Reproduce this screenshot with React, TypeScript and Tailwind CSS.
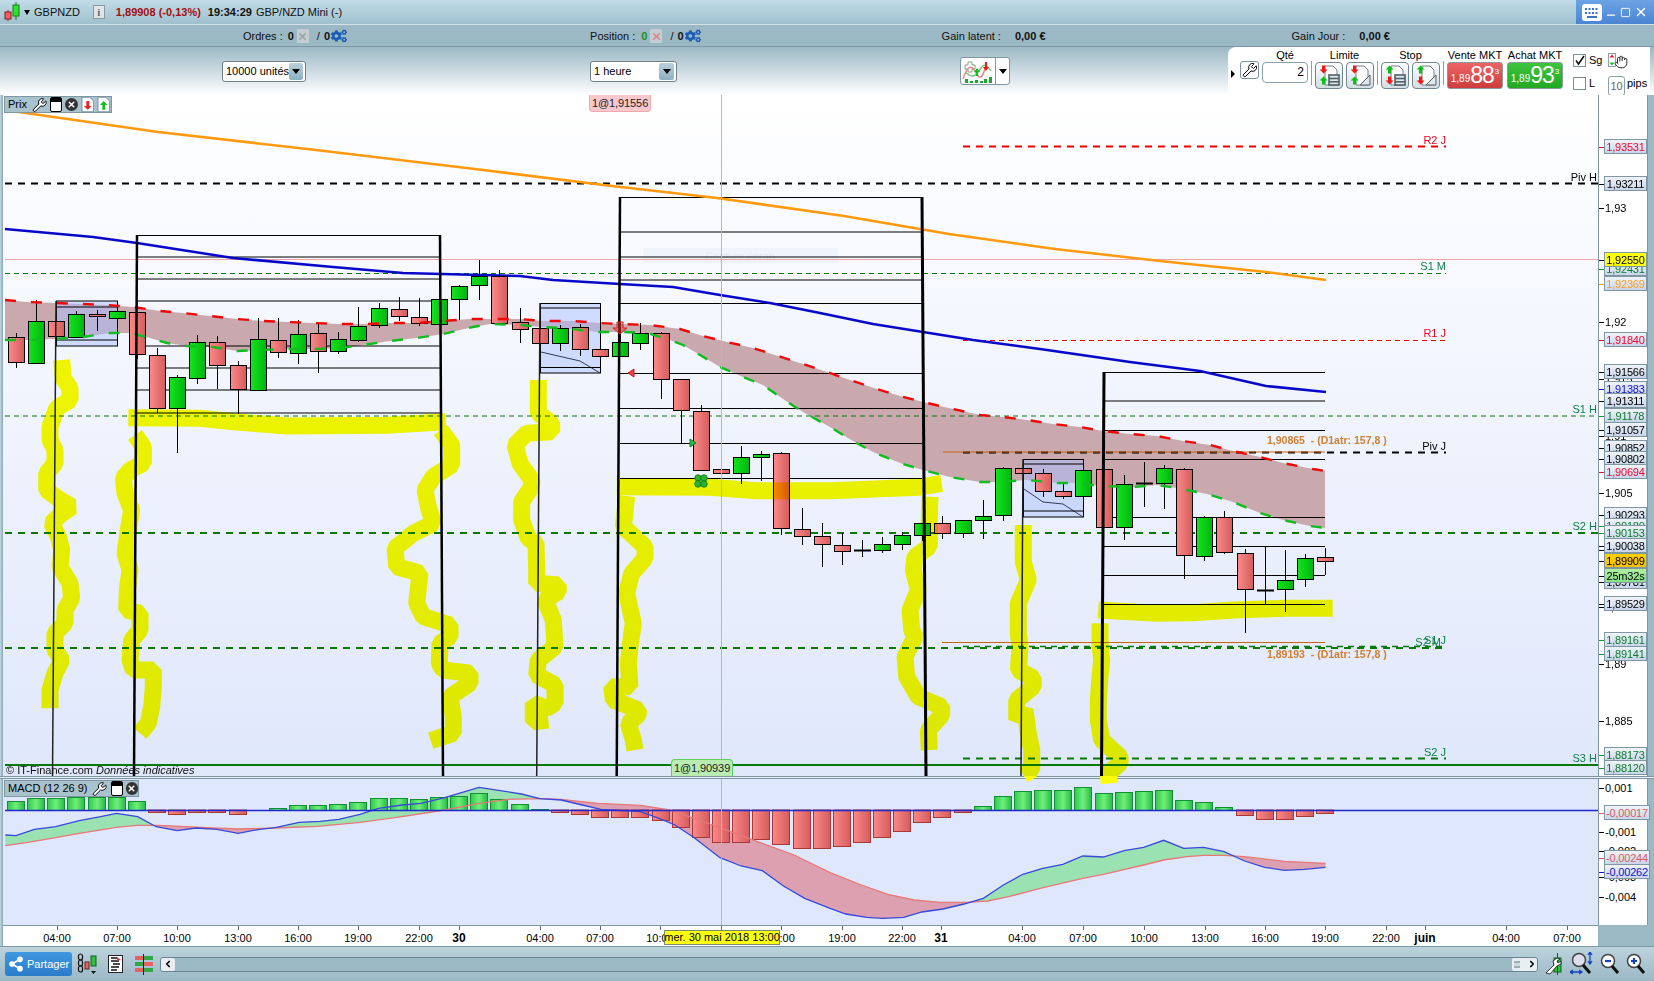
import { Wrench, X, Minus, Square, Hand, Share2, ChevronLeft, ChevronRight } from 'lucide-react';
import { FaCogs } from 'react-icons/fa';

type Candle = [number, number, number, number, number, 'r' | 'g' | 'd'];
type Pt = number[];

// x, body top, body bottom, wick high, wick low
const CANDLES: Candle[] = [
  [16, 337, 362, 333, 368, 'r'], [36, 321, 363, 300, 363, 'g'], [56, 321, 336, 321, 336, 'r'], [76, 314, 337, 311, 337, 'g'],
  [97, 314, 316, 310, 331, 'r'], [117, 311, 318, 311, 318, 'g'], [137, 312, 354, 312, 359, 'r'], [157, 355, 408, 348, 413, 'r'],
  [177, 377, 408, 375, 453, 'g'], [197, 342, 378, 335, 384, 'g'], [217, 342, 365, 336, 389, 'r'], [238, 365, 389, 361, 414, 'r'],
  [258, 339, 390, 318, 390, 'g'], [278, 340, 352, 318, 358, 'r'], [298, 334, 353, 320, 364, 'g'], [318, 333, 351, 323, 373, 'r'],
  [338, 339, 351, 332, 354, 'g'], [358, 326, 340, 307, 342, 'g'], [379, 308, 325, 303, 328, 'g'], [399, 309, 316, 297, 321, 'r'],
  [419, 317, 323, 298, 326, 'r'], [439, 299, 324, 299, 324, 'g'], [459, 286, 299, 285, 320, 'g'], [479, 276, 285, 260, 300, 'g'],
  [499, 276, 323, 270, 325, 'r'], [520, 322, 329, 308, 343, 'r'], [540, 328, 343, 328, 343, 'r'], [560, 328, 343, 325, 351, 'g'],
  [580, 327, 349, 324, 356, 'r'], [600, 349, 356, 349, 356, 'r'], [620, 342, 356, 322, 356, 'g'], [640, 333, 343, 323, 350, 'g'],
  [661, 333, 379, 332, 399, 'r'], [681, 379, 410, 379, 443, 'r'], [701, 411, 470, 405, 470, 'r'], [721, 469, 473, 460, 521, 'r'],
  [741, 457, 473, 446, 484, 'g'], [761, 454, 457, 451, 481, 'g'], [781, 453, 528, 452, 535, 'r'], [802, 529, 536, 508, 545, 'r'],
  [822, 536, 544, 523, 567, 'r'], [842, 545, 551, 533, 565, 'r'], [862, 550, 551, 540, 557, 'd'], [882, 544, 550, 537, 553, 'g'],
  [902, 535, 544, 532, 550, 'g'], [922, 523, 535, 523, 541, 'g'], [942, 523, 533, 516, 539, 'r'], [963, 520, 533, 520, 538, 'g'],
  [983, 516, 520, 500, 539, 'g'], [1003, 468, 515, 467, 521, 'g'], [1023, 468, 473, 468, 473, 'r'], [1043, 473, 491, 469, 497, 'r'],
  [1063, 491, 496, 483, 499, 'r'], [1083, 470, 496, 470, 496, 'g'], [1104, 469, 527, 469, 527, 'r'], [1124, 484, 527, 475, 540, 'g'],
  [1144, 483, 484, 462, 507, 'd'], [1164, 468, 483, 465, 509, 'g'], [1184, 469, 555, 468, 579, 'r'], [1204, 517, 556, 516, 561, 'g'],
  [1224, 517, 552, 511, 554, 'r'], [1245, 553, 589, 549, 633, 'r'], [1265, 590, 591, 547, 604, 'd'], [1285, 580, 589, 550, 612, 'g'],
  [1305, 558, 579, 554, 587, 'g'], [1325, 557, 561, 548, 575, 'r'],
];

const RED_BAND: Pt[] = [
  [5, 300], [27, 302], [55, 303], [107, 305], [133, 307], [160, 311], [183, 313], [210, 316], [237, 319], [263, 321], [287, 322], [313, 323], [340, 324], [367, 324], [390, 323], [417, 323], [443, 321], [470, 319], [493, 319], [520, 319], [543, 321], [573, 321], [600, 323], [620, 324], [650, 325], [680, 329], [703, 336], [727, 342], [753, 348], [778, 356], [803, 364], [827, 372], [853, 381], [877, 389], [900, 396], [927, 403], [953, 409], [980, 415], [1003, 417], [1027, 420], [1053, 424], [1080, 427], [1103, 431], [1130, 434], [1157, 436], [1183, 441], [1210, 445], [1233, 451], [1260, 457], [1283, 463], [1313, 469], [1325, 471],
];
const GREEN_BAND: Pt[] = [
  [5, 340], [27, 340], [53, 339], [83, 337], [110, 333], [130, 333], [150, 338], [167, 343], [187, 346], [213, 347], [237, 351], [260, 350], [287, 349], [317, 349], [340, 348], [363, 345], [390, 341], [417, 338], [443, 334], [473, 327], [490, 324], [520, 325], [540, 327], [563, 328], [597, 332], [623, 332], [647, 333], [667, 339], [683, 345], [700, 355], [720, 367], [743, 377], [763, 385], [783, 399], [803, 412], [830, 427], [853, 441], [873, 452], [900, 463], [923, 470], [950, 477], [980, 482], [1000, 482], [1027, 480], [1057, 483], [1077, 483], [1100, 486], [1133, 487], [1157, 485], [1177, 488], [1207, 494], [1233, 502], [1260, 513], [1283, 520], [1310, 526], [1325, 528],
];
const ORANGE_MA: Pt[] = [[5, 110], [158, 132], [316, 150], [475, 169], [612, 186], [717, 198], [844, 216], [949, 234], [1055, 249], [1160, 261], [1266, 272], [1326, 280]];
const BLUE_MA: Pt[] = [[5, 229], [93, 237], [137, 243], [233, 258], [333, 267], [403, 273], [520, 276], [553, 280], [620, 284], [673, 287], [720, 295], [770, 303], [820, 313], [873, 324], [923, 332], [973, 340], [1040, 349], [1130, 362], [1200, 371], [1266, 386], [1326, 392]];

const line = (pts: Pt[]) => pts.map((p) => p.join(',')).join(' ');
const fromZoom = (ox: number, oy: number, fx: number, raw: Pt[]) => raw.map(([x, y]) => [+(ox + x / fx).toFixed(1), +(oy + y / 3).toFixed(1)]);

const Z10 = (raw: Pt[]) => fromZoom(20, 350, 3, raw);
const Z11 = (raw: Pt[]) => fromZoom(510, 370, 3, raw);
const Z12 = (raw: Pt[]) => fromZoom(900, 500, 3, raw);

const YELLOW: Pt[][] = [
  Z10([[125, 30], [130, 85], [150, 115], [150, 150], [110, 175], [90, 230], [90, 270], [105, 300], [105, 340], [80, 370], [80, 420], [120, 450], [155, 470], [120, 495], [95, 520], [115, 560], [125, 600], [120, 650], [150, 700], [155, 745], [135, 780], [135, 820], [105, 850], [105, 900], [125, 930], [105, 970], [90, 1020], [90, 1075]]),
  Z10([[345, 255], [370, 290], [370, 340], [330, 360], [310, 385], [315, 430], [335, 480], [325, 540], [315, 610], [330, 660], [322, 720], [320, 780], [360, 790], [360, 840], [335, 870], [330, 930], [340, 960], [400, 960], [400, 1010], [395, 1070], [385, 1120], [360, 1150]]),
  Z10([[1262, 240], [1295, 285], [1295, 345], [1240, 380], [1215, 420], [1225, 470], [1240, 520], [1180, 550], [1125, 595], [1130, 650], [1200, 670], [1190, 760], [1210, 800], [1290, 825], [1290, 860], [1260, 880], [1258, 940], [1270, 960], [1350, 970], [1350, 1000], [1290, 1040], [1300, 1100], [1300, 1150], [1232, 1172]]),
  Z10([[325, 203], [540, 205], [640, 215], [800, 228], [1100, 226], [1278, 215]]),
  Z11([[85, 30], [85, 130], [125, 160], [125, 185], [50, 190], [15, 225], [30, 280], [65, 330], [65, 350], [35, 395], [35, 450], [55, 505], [78, 520], [80, 600], [80, 640], [145, 645], [145, 665], [105, 690], [130, 750], [135, 830], [85, 870], [80, 915], [135, 945], [135, 1000], [110, 1015], [70, 1000], [70, 1055], [115, 1050]]),
  Z11([[320, 350], [600, 352], [740, 362], [960, 362], [1225, 352], [1295, 340]]),
  Z11([[350, 378], [340, 470], [405, 530], [405, 565], [365, 610], [350, 670], [370, 760], [360, 830], [355, 880], [360, 950], [305, 950], [310, 990], [385, 1020], [385, 1035], [355, 1060], [370, 1110], [375, 1140]]),
  Z11([[1260, 380], [1258, 450], [1258, 530], [1215, 560], [1210, 600], [1225, 660], [1200, 720], [1205, 780], [1215, 800], [1185, 860], [1190, 920], [1225, 980], [1295, 1010], [1295, 1035], [1255, 1080], [1258, 1140]]),
  Z12([[370, 75], [370, 185], [385, 240], [355, 310], [355, 400], [360, 440], [355, 510], [400, 535], [400, 560], [350, 600], [350, 660], [375, 630], [385, 700], [395, 750], [395, 810], [370, 825]]),
  Z12([[600, 370], [600, 430], [605, 480], [600, 530], [595, 600], [595, 660], [605, 720], [660, 770], [660, 790], [625, 820], [628, 850]]),
  Z12([[595, 330], [770, 340], [880, 338], [1000, 330], [1160, 325], [1298, 325]]),
];

const LEVELS = [
  { x1: 963, x2: 1446, y: 146.5, color: '#ee0000', w: 2, dash: '7 6' },
  { x1: 963, x2: 1446, y: 340.5, color: '#ee0000', w: 1, dash: '5 4' },
  { x1: 5, x2: 1446, y: 273.5, color: '#087808', w: 1, dash: '5 4' },
  { x1: 5, x2: 1598, y: 416, color: '#087808', w: 1, dash: '5 4' },
  { x1: 5, x2: 1598, y: 183.5, color: '#000000', w: 2, dash: '7 6' },
  { x1: 963, x2: 1446, y: 452.5, color: '#000000', w: 2, dash: '7 6' },
  { x1: 5, x2: 1598, y: 533, color: '#087808', w: 2, dash: '7 6' },
  { x1: 5, x2: 1446, y: 648, color: '#087808', w: 2, dash: '7 6' },
  { x1: 963, x2: 1446, y: 646.5, color: '#087808', w: 1.5, dash: '6 5' },
  { x1: 963, x2: 1446, y: 758.5, color: '#087808', w: 2, dash: '7 6' },
];

const LEVEL_TEXTS = [
  { t: 'R2 J', x: 1446, y: 144, c: '#ee0020' }, { t: 'Piv H', x: 1597, y: 181, c: '#000' }, { t: 'S1 M', x: 1446, y: 270, c: '#108048' },
  { t: 'R1 J', x: 1446, y: 337, c: '#ee0020' }, { t: 'S1 H', x: 1597, y: 413, c: '#108048' }, { t: 'Piv J', x: 1446, y: 450, c: '#000' },
  { t: 'S2 H', x: 1597, y: 530, c: '#108048' }, { t: 'S1 J', x: 1446, y: 644, c: '#108048' }, { t: 'S2 M', x: 1441, y: 646, c: '#108048' },
  { t: 'S2 J', x: 1446, y: 756, c: '#108048' }, { t: 'S3 H', x: 1597, y: 762, c: '#108048' },
];

type Ticket = { t: string; y: number; tone?: string; bg?: string; plain?: boolean };
const TONE: Record<string, string> = {
  red: 'text-[#f00830]', green: 'text-[#0c7c2c]', blue: 'text-[#1010e0]', orange: 'text-[#ff9c18]', black: 'text-black', pink: 'text-[#e05860]',
};
const TICK_COLOR: Record<string, string> = {
  red: 'bg-[#f00830]', green: 'bg-[#0c9c2c]', blue: 'bg-[#1010e0]', orange: 'bg-[#ff9c18]', black: 'bg-black', pink: 'bg-[#e05860]',
};

const PRICE_LABELS: Ticket[] = [
  { t: '1,93', y: 208, plain: true }, { t: '1,92', y: 322, plain: true }, { t: '1,915', y: 379, plain: true }, { t: '1,91', y: 436, plain: true },
  { t: '1,905', y: 493, plain: true }, { t: '1,90', y: 550, plain: true }, { t: '1,895', y: 607, plain: true }, { t: '1,89', y: 664, plain: true }, { t: '1,885', y: 721, plain: true },
  { t: '1,93531', y: 147, tone: 'red' }, { t: '1,93211', y: 184 }, { t: '1,92431', y: 269, tone: 'green' }, { t: '1,92369', y: 284, tone: 'orange' },
  { t: '1,92550', y: 260, bg: 'bg-[#ffff10]' }, { t: '1,91840', y: 340, tone: 'red' }, { t: '1,91566', y: 372 }, { t: '1,91383', y: 389, tone: 'blue' },
  { t: '1,91311', y: 401 }, { t: '1,91178', y: 416, tone: 'green' }, { t: '1,91057', y: 430 }, { t: '1,90852', y: 448 }, { t: '1,90802', y: 459 },
  { t: '1,90694', y: 472, tone: 'red' }, { t: '1,90293', y: 515 }, { t: '1,90180', y: 526, tone: 'green' }, { t: '1,90153', y: 533, tone: 'green' }, { t: '1,90038', y: 546 },
  { t: '1,89781', y: 582 }, { t: '1,89909', y: 561, bg: 'bg-linear-to-b from-[#ffd000] to-[#f8c000]' }, { t: '25m32s', y: 576, bg: 'bg-linear-to-b from-[#b0f0a0] to-[#88e088]' },
  { t: '1,89529', y: 604 }, { t: '1,89161', y: 640, tone: 'green' }, { t: '1,89141', y: 654, tone: 'green' }, { t: '1,88173', y: 755, tone: 'green' }, { t: '1,88120', y: 768, tone: 'green' },
];

const MACD_LABELS: Ticket[] = [
  { t: '0,001', y: 788, plain: true }, { t: '-0,001', y: 832, plain: true }, { t: '-0,002', y: 851, plain: true }, { t: '-0,003', y: 877, plain: true }, { t: '-0,004', y: 897, plain: true },
  { t: '-0,00017', y: 813, tone: 'pink' }, { t: '-0,00244', y: 858, tone: 'pink' }, { t: '-0,00262', y: 872, tone: 'blue' },
];

const TIMES: [number, string, boolean?][] = [
  [57, '04:00'], [117, '07:00'], [177, '10:00'], [238, '13:00'], [298, '16:00'], [358, '19:00'], [419, '22:00'], [459, '30', true],
  [540, '04:00'], [600, '07:00'], [660, '10:00'], [721, '13:00'], [781, '16:00'], [842, '19:00'], [902, '22:00'], [941, '31', true],
  [1022, '04:00'], [1083, '07:00'], [1144, '10:00'], [1205, '13:00'], [1265, '16:00'], [1325, '19:00'], [1386, '22:00'], [1425, 'juin', true], [1506, '04:00'], [1567, '07:00'],
];

// top of each histogram bar (y), the zero line sits at 810
const HISTO: number[] = [
  801, 798, 798, 797, 797, 797, 801, 812, 814, 812, 812, 814, 810, 808, 805, 805, 804, 802, 798, 798, 799, 797, 796, 793, 799, 804, 809, 812, 814, 817, 817, 817,
  820, 827, 837, 842, 842, 839, 844, 848, 848, 846, 842, 837, 831, 822, 817, 812, 806, 796, 791, 790, 790, 787, 793, 792, 791, 790, 800, 802, 807, 815, 819, 819, 816, 813,
];

const M5 = (raw: Pt[]) => fromZoom(0, 760, 1.889, raw);
const M6 = (raw: Pt[]) => fromZoom(830, 760, 1.903, raw);
const MACD_LINE: Pt[] = [
  ...M5([[10, 225], [30, 227], [65, 208], [105, 200], [150, 182], [190, 170], [220, 160], [260, 170], [295, 200], [335, 212], [370, 204], [410, 208], [450, 220], [490, 208], [520, 203], [565, 187], [605, 184], [640, 178], [680, 163], [715, 145], [760, 135], [795, 130], [840, 113], [905, 82], [985, 102], [1020, 116], [1060, 120], [1100, 135], [1135, 148], [1210, 155], [1245, 175], [1275, 195], [1310, 232], [1360, 293], [1400, 318], [1440, 332], [1480, 378], [1520, 415], [1568, 445]]),
  ...M6([[30, 462], [70, 472], [100, 475], [140, 472], [175, 456], [215, 447], [255, 432], [292, 415], [330, 375], [367, 343], [405, 325], [443, 313], [481, 288], [520, 291], [560, 272], [597, 262], [635, 241], [673, 265], [711, 262], [750, 275], [789, 303], [827, 322], [865, 331], [903, 328], [943, 322]]),
];
const SIGNAL_LINE: Pt[] = [
  ...M5([[10, 257], [50, 248], [105, 233], [150, 220], [220, 202], [260, 196], [300, 196], [380, 202], [450, 207], [520, 204], [600, 199], [680, 187], [750, 172], [840, 150], [905, 130], [960, 118], [1020, 116], [1060, 118], [1130, 130], [1210, 136], [1265, 150], [1320, 180], [1380, 215], [1440, 250], [1500, 285], [1568, 338]]),
  ...M6([[60, 375], [110, 403], [160, 420], [210, 427], [260, 427], [300, 423], [340, 410], [400, 385], [481, 355], [520, 343], [597, 315], [635, 300], [680, 290], [711, 286], [750, 286], [789, 290], [865, 304], [943, 310]]),
];

function MainChart() {
  return (
    <svg width={1595} height={681} viewBox="3 95 1595 681" className="block shrink-0 overflow-visible">
      <defs>
        <linearGradient id="chartBg" x1="0" y1="0" x2="0" y2="1">
          <stop offset="0" stopColor="#ffffff" />
          <stop offset="1" stopColor="#dfe7fb" />
        </linearGradient>
        <linearGradient id="redBody" x1="0" y1="0" x2="1" y2="0">
          <stop offset="0" stopColor="#fc8a8a" />
          <stop offset="1" stopColor="#d45c5c" />
        </linearGradient>
        <linearGradient id="greenBody" x1="0" y1="0" x2="1" y2="0">
          <stop offset="0" stopColor="#14e41c" />
          <stop offset="1" stopColor="#00b410" />
        </linearGradient>
      </defs>
      <rect x={3} y={95} width={1595} height={681} fill="url(#chartBg)" />

      <rect x={643} y={248} width={195} height={15} fill="#eff3fc" />
      <text x={740} y={260} fontSize={11} fill="#dfe5f2" textAnchor="middle">Capture écran</text>

      <line x1={5} x2={1598} y1={259.5} y2={259.5} stroke="#f0a4a8" strokeWidth={1} />
      <polygon points={line([...RED_BAND, ...[...GREEN_BAND].reverse()])} fill="#c9a9ae" />

      <rect x={56.5} y={301} width={61} height={45} fill="#a9c0ff" fillOpacity={0.5} stroke="#000" />
      <rect x={540.5} y={303.5} width={60} height={69.5} fill="#a9c0ff" fillOpacity={0.5} stroke="#000" />
      <rect x={1023.5} y={459.5} width={60} height={57.5} fill="#a9c0ff" fillOpacity={0.5} stroke="#000" />
      <polyline points="541,352 580,361 600,373" fill="none" stroke="#333b55" strokeWidth={1} />
      <polyline points="1024,489 1043,502 1063,504 1083,517" fill="none" stroke="#333b55" strokeWidth={1} />

      {[235.5, 257, 279, 301, 346, 368, 390, 413].map((y) => (
        <line key={y} x1={137} x2={440} y1={y} y2={y} stroke="#000" />
      ))}
      {[307, 340].map((y) => (<line key={y} x1={56} x2={117} y1={y} y2={y} stroke="#000" />))}
      {[197.5, 232, 257, 280, 303.5, 373.5, 408.5, 443.5, 478.5].map((y) => (
        <line key={y} x1={620} x2={922} y1={y} y2={y} stroke="#000" />
      ))}
      {[308, 367.5].map((y) => (<line key={y} x1={540} x2={600} y1={y} y2={y} stroke="#000" />))}
      {[372.5, 401, 430.5, 459.5, 517.5, 546.5, 575.5, 604.5].map((y) => (
        <line key={y} x1={1104} x2={1325} y1={y} y2={y} stroke="#000" />
      ))}
      {[464, 511].map((y) => (<line key={y} x1={1023} x2={1083} y1={y} y2={y} stroke="#000" />))}

      {LEVELS.map((l) => (
        <line key={`${l.x1}-${l.y}`} x1={l.x1} x2={l.x2} y1={l.y} y2={l.y} stroke={l.color} strokeWidth={l.w} strokeDasharray={l.dash} />
      ))}
      <line x1={943} x2={1325} y1={452} y2={452} stroke="#c86410" />
      <line x1={942} x2={1325} y1={642.5} y2={642.5} stroke="#c86410" />
      <line x1={5} x2={1598} y1={765} y2={765} stroke="#087808" strokeWidth={2} />

      <polyline points={line(ORANGE_MA)} fill="none" stroke="#ff9a10" strokeWidth={2.6} />
      <polyline points={line(BLUE_MA)} fill="none" stroke="#0808c8" strokeWidth={2.6} />

      {CANDLES.map(([x, top, bottom, hi, lo, kind]) => (
        <g key={x}>
          <line x1={x + 0.5} x2={x + 0.5} y1={hi} y2={lo} stroke="#000" />
          {kind === 'd' ? (
            <line x1={x - 8} x2={x + 9} y1={top + 0.5} y2={top + 0.5} stroke="#000" strokeWidth={2} />
          ) : (
            <rect x={x - 7.5} y={top + 0.5} width={16} height={bottom - top} fill={kind === 'r' ? 'url(#redBody)' : 'url(#greenBody)'} stroke="#000" />
          )}
        </g>
      ))}

      <g className="mix-blend-multiply" fill="none" stroke="#fbfe00" strokeWidth={17} strokeLinejoin="bevel">
        {YELLOW.map((pts, i) => (<polyline key={i} points={line(pts)} />))}
      </g>

      <polyline points={line(RED_BAND)} fill="none" stroke="#f00808" strokeWidth={2.4} strokeDasharray="11 15" />
      <polyline points={line(GREEN_BAND)} fill="none" stroke="#10bc20" strokeWidth={2.4} strokeDasharray="11 15" />

      <line x1={721.5} x2={721.5} y1={95} y2={776} stroke="#f0a0a4" />

      <line x1={56} x2={52.5} y1={301} y2={776} stroke="#222" strokeWidth={1.5} />
      <line x1={137} x2={134} y1={235} y2={776} stroke="#000" strokeWidth={2.5} />
      <line x1={440} x2={443} y1={235} y2={776} stroke="#000" strokeWidth={2.5} />
      <line x1={540} x2={536.7} y1={303} y2={776} stroke="#222" strokeWidth={1.5} />
      <line x1={620} x2={616.7} y1={197} y2={776} stroke="#000" strokeWidth={2.5} />
      <line x1={922} x2={926} y1={197} y2={776} stroke="#000" strokeWidth={3} />
      <line x1={1023} x2={1021} y1={459} y2={776} stroke="#222" strokeWidth={1.5} />
      <line x1={1104} x2={1101.5} y1={372} y2={776} stroke="#000" strokeWidth={3} />

      <path d="M617 322h6v6h4l-7 6-7-6h4z" fill="#f04040" fillOpacity={0.5} stroke="#d02020" />
      <path d="M634 369v8l-6-4z" fill="#f04040" stroke="#c02020" />
      <path d="M690 439v8l6-4z" fill="#20c040" stroke="#108020" />
      <g fill="#30b030" stroke="#108820">
        <circle cx={698} cy={478} r={3.2} /><circle cx={704} cy={478} r={3.2} /><circle cx={698} cy={484} r={3.2} /><circle cx={704} cy={484} r={3.2} />
      </g>

      {LEVEL_TEXTS.map((l) => (
        <text key={l.t} x={l.x} y={l.y} fontSize={11} fill={l.c} textAnchor="end">{l.t}</text>
      ))}
      <text x={1267} y={444} fontSize={10.5} fontWeight={700} fill="#d08030" xmlSpace="preserve">1,90865  - (D1atr: 157,8 )</text>
      <text x={1267} y={658} fontSize={10.5} fontWeight={700} fill="#d08030" xmlSpace="preserve">1,89193  - (D1atr: 157,8 )</text>
      <text x={6} y={774} fontSize={11} fill="#111">© IT-Finance.com</text>
      <text x={96} y={774} fontSize={11} fontStyle="italic" fill="#111">Données indicatives</text>
    </svg>
  );
}

function MacdChart() {
  return (
    <svg width={1595} height={146} viewBox="3 779 1595 146" className="block shrink-0">
      <defs>
        <linearGradient id="histGreen" x1="0" y1="0" x2="1" y2="0">
          <stop offset="0" stopColor="#30c850" />
          <stop offset="0.5" stopColor="#70f078" />
          <stop offset="1" stopColor="#28b848" />
        </linearGradient>
        <linearGradient id="histRed" x1="0" y1="0" x2="1" y2="0">
          <stop offset="0" stopColor="#fc8888" />
          <stop offset="1" stopColor="#d45c5c" />
        </linearGradient>
        <clipPath id="macdUp">
          <rect x={3} y={779} width={147} height={146} />
          <rect x={262} y={779} width={278} height={146} />
          <rect x={968} y={779} width={272} height={146} />
        </clipPath>
        <clipPath id="macdDown">
          <rect x={150} y={779} width={112} height={146} />
          <rect x={540} y={779} width={428} height={146} />
          <rect x={1240} y={779} width={90} height={146} />
        </clipPath>
      </defs>
      <rect x={3} y={779} width={1595} height={146} fill="#dfe7fd" />
      <polygon clipPath="url(#macdUp)" points={line([...MACD_LINE, ...[...SIGNAL_LINE].reverse()])} fill="#9ae2b2" />
      <polygon clipPath="url(#macdDown)" points={line([...MACD_LINE, ...[...SIGNAL_LINE].reverse()])} fill="#dca0b0" />
      {HISTO.map((y, i) => {
        const x = CANDLES[i][0];
        if (y === 810) return null;
        return y < 810 ? (
          <rect key={x} x={x - 8.5} y={y + 0.5} width={17} height={810 - y} fill="url(#histGreen)" stroke="#109030" />
        ) : (
          <rect key={x} x={x - 8.5} y={810} width={17} height={y - 810 + 0.5} fill="url(#histRed)" stroke="#a83838" />
        );
      })}
      <polyline points={line(SIGNAL_LINE)} fill="none" stroke="#e87878" strokeWidth={1.3} />
      <polyline points={line(MACD_LINE)} fill="none" stroke="#3848d8" strokeWidth={1.3} />
      <line x1={5} x2={1598} y1={810.5} y2={810.5} stroke="#1c28d0" strokeWidth={1.5} />
      <line x1={721.5} x2={721.5} y1={779} y2={925} stroke="#f0a0a4" />
    </svg>
  );
}

function AxisLabels({ items, top, boxWidth }: { items: Ticket[]; top: number; boxWidth: string }) {
  return (
    <>
      {items.map((l) => {
        const tone = l.tone ?? 'black';
        return (
          <div key={l.t}>
            <div className={`absolute left-0 h-px w-[5px] ${TICK_COLOR[tone]}`} style={{ top: l.y - top }} />
            {l.plain ? (
              <div className="absolute left-[6px] text-[11px] leading-[14px] text-black" style={{ top: l.y - top - 7 }}>{l.t}</div>
            ) : (
              <div
                className={`absolute left-[5px] h-[15px] ${boxWidth} border border-[#7f97a3] text-center text-[11px] leading-[14px] tracking-[-0.2px] whitespace-nowrap ${TONE[tone]} ${l.bg ?? 'bg-linear-to-b from-[#f0f4f9] to-[#c8d5ea]'}`}
                style={{ top: l.y - top - 8 }}
              >
                {l.t}
              </div>
            )}
          </div>
        );
      })}
    </>
  );
}

function CandleLogo() {
  return (
    <svg width={17} height={22} viewBox="0 0 17 22">
      <line x1={4} x2={4} y1={9} y2={20} stroke="#a02020" />
      <rect x={1} y={11} width={6} height={7} fill="#f06060" stroke="#802020" />
      <line x1={12} x2={12} y1={1} y2={19} stroke="#108010" />
      <rect x={9} y={4} width={6} height={11} fill="#30e030" stroke="#108010" />
    </svg>
  );
}

function WrenchBtn() {
  return <Wrench size={16} strokeWidth={1.5} className="fill-white text-black" />;
}

function CloseDot() {
  return (
    <span className="flex h-[13px] w-[13px] items-center justify-center rounded-full bg-[#333]">
      <X size={9} strokeWidth={4} className="text-white" />
    </span>
  );
}

function WindowIcon() {
  return (
    <span className="flex h-[15px] w-[12px] flex-col rounded-[2px] border border-black bg-white">
      <span className="h-[4px] bg-black" />
    </span>
  );
}

function DocArrow({ up }: { up?: boolean }) {
  return (
    <svg width={14} height={17} viewBox="0 0 14 17">
      <path d="M1 1h8l4 4v11H1z" fill="#fff" stroke="#7890a0" />
      <path d={up ? 'M7 5l-4 4h2.5v5h3V9H11z' : 'M7 14l-4-4h2.5V5h3v5H11z'} fill={up ? '#10c020' : '#f02020'} />
    </svg>
  );
}

function XBox({ pink }: { pink?: boolean }) {
  return (
    <span className="flex h-[14px] w-[12px] items-center justify-center bg-[#c4cdd0]">
      <X size={11} strokeWidth={3.5} className={pink ? 'text-[#e08090]' : 'text-[#98a4a8]'} />
    </span>
  );
}

function TradeBtn({ upFirst, lines }: { upFirst?: boolean; lines?: boolean }) {
  const red = '#f01818';
  const green = '#08c018';
  const down = 'M0 0h4v5h3l-5 5-5-5h3z';
  const up = 'M0 10h4V5h3L2 0-3 5h3z';
  return (
    <button className="h-[27px] w-[28px] rounded-[4px] border border-[#6f8792] bg-linear-to-b from-white to-[#d4dde2] p-0">
      <svg width={26} height={25} viewBox="0 0 26 25" className="block">
        <path d="M9 3h8l4 4v15H9z" fill="#fff" stroke="#708088" />
        {lines ? (
          <g stroke="#506068" strokeWidth={1.6} fill="#dfe5e8">
            <rect x={13} y={12} width={10} height={10} />
            <line x1={13} x2={23} y1={15.5} y2={15.5} />
            <line x1={13} x2={23} y1={18.8} y2={18.8} />
          </g>
        ) : (
          <g stroke="#506068" fill="#dfe5e8">
            <path d="M13 22L23 12v10z" />
          </g>
        )}
        <g transform="translate(6 2.5) scale(0.8)"><path d={upFirst ? up : down} fill={upFirst ? green : red} /></g>
        <g transform="translate(6 13.5) scale(0.8)"><path d={upFirst ? down : up} fill={upFirst ? red : green} /></g>
      </svg>
    </button>
  );
}

function MktBtn({ big, tone }: { big: string; tone: string }) {
  return (
    <button className={`flex h-[27px] w-[56px] items-center justify-center rounded-[3px] border border-[#8c9aa0] font-normal text-white ${tone}`}>
      <span className="mt-[6px] text-[10px] leading-none">1,89</span>
      <span className="text-[23px] leading-none tracking-[-1px]">{big}</span>
      <span className="mb-[8px] ml-[1px] text-[8px] leading-none">3</span>
    </button>
  );
}

function Sep() {
  return <span className="mx-[3px] mt-[14px] h-[24px] w-px bg-[#90a0a8]" />;
}

function TradingPanel() {
  return (
    <div className="ml-[218px] flex h-[48px] w-[422px] shrink-0 items-start rounded-l-[8px] bg-white text-[11px] text-black">
      <span className="ml-[3px] mt-[23px] h-0 w-0 border-y-[4px] border-l-[4px] border-y-transparent border-l-black" />
      <span className="ml-[5px] mt-[14px] flex h-[18px] w-[19px] items-center justify-center rounded-[3px] border border-[#7a929e] bg-white"><WrenchBtn /></span>
      <div className="ml-[3px] flex w-[46px] flex-col items-center">
        <span className="h-[15px] leading-[17px]">Qté</span>
        <span className="h-[21px] w-[46px] rounded-[4px] border border-[#8aa0ac] pr-[3px] text-right text-[12px] leading-[19px]">2</span>
      </div>
      <Sep />
      <div className="flex w-[59px] flex-col items-center">
        <span className="h-[15px] leading-[17px]">Limite</span>
        <div className="flex gap-[3px]"><TradeBtn lines /><TradeBtn /></div>
      </div>
      <Sep />
      <div className="flex w-[59px] flex-col items-center">
        <span className="h-[15px] leading-[17px]">Stop</span>
        <div className="flex gap-[3px]"><TradeBtn upFirst lines /><TradeBtn upFirst /></div>
      </div>
      <Sep />
      <div className="flex w-[56px] flex-col items-center">
        <span className="h-[15px] whitespace-nowrap leading-[17px]">Vente MKT</span>
        <MktBtn big="88" tone="bg-linear-to-b from-[#ee6464] to-[#cc3c3c]" />
      </div>
      <div className="ml-[4px] flex w-[56px] flex-col items-center">
        <span className="h-[15px] whitespace-nowrap leading-[17px]">Achat MKT</span>
        <MktBtn big="93" tone="bg-linear-to-b from-[#3cc43c] to-[#24a824]" />
      </div>
      <div className="ml-[10px] flex flex-col">
        <div className="mt-[6px] flex h-[14px] items-center">
          <span className="flex h-[13px] w-[13px] items-center justify-center border border-[#7f8f98]">
            <svg width={11} height={11} viewBox="0 0 11 11"><path d="M2 5.5l2.5 3.5L10 1" fill="none" stroke="#111" strokeWidth={1.6} /></svg>
          </span>
          <span className="ml-[3px] w-[19px]">Sg</span>
          <span className="relative flex w-[16px]">
            <svg width={8} height={14} viewBox="0 0 8 14"><rect x={0.5} y={0.5} width={7} height={13} fill="#fff" stroke="#8aa0ac" /><path d="M4 1.5l-2.5 3h5z" fill="#f01818" /><path d="M4 12.5l-2.5-3h5z" fill="#08c018" /></svg>
            <Hand size={14} strokeWidth={1.4} className="absolute left-[6px] top-[2px] fill-white text-black" />
          </span>
        </div>
        <div className="mt-[9px] flex items-start">
          <span className="mt-[1px] h-[13px] w-[13px] border border-[#7f8f98]" />
          <span className="ml-[3px] w-[19px] leading-[15px]">L</span>
          <span className="h-[20px] w-[17px] rounded-[3px] border border-[#8aa0ac] text-center leading-[18px] text-[#666]">10</span>
          <span className="ml-[2px] leading-[15px]">pips</span>
        </div>
      </div>
    </div>
  );
}

function Select({ label, width }: { label: string; width: string }) {
  return (
    <div className={`flex h-[21px] ${width} items-center justify-between rounded-[3px] border border-[#6f7f88] bg-white pl-[3px] pr-[2px] text-[11px] text-black`}>
      <span className="whitespace-nowrap">{label}</span>
      <span className="flex h-[17px] w-[15px] items-center justify-center rounded-[2px] bg-linear-to-b from-[#b8d0dc] to-[#8fb0c0]">
        <span className="h-0 w-0 border-x-[4px] border-t-[5px] border-x-transparent border-t-black" />
      </span>
    </div>
  );
}

function IndicatorBtn() {
  return (
    <div className="ml-[283px] flex h-[28px] w-[50px] rounded-[3px] border border-[#7f97a3] bg-white">
      <span className="flex w-[35px] items-center justify-center border-r border-[#7f97a3]">
        <svg width={32} height={25} viewBox="0 0 32 25">
          <path d="M3 6h3V3h4v3h3v4h-3v3H6v-3H3z" fill="#fff" stroke="#88a088" />
          <path d="M1 20C6 5 10 6 14 14s7 4 10-8" fill="none" stroke="#f08080" strokeWidth={1.5} />
          <path d="M3 13C8 17 12 20 17 12s7-7 12 0" fill="none" stroke="#78c878" strokeWidth={1.5} />
          <path d="M15 17l-3-4h2V9h2v4h2z" fill="#10c020" transform="rotate(180 15 13)" />
          <path d="M24 12l-3-4h2V3h2v5h2z" fill="#f01818" />
          <path d="M3 24v-4h3v4zM8 24v-2h3v2zM13 24v-3h3v3zM18 24v-2h3v2zM22 24v-4h3v4zM27 24v-6h3v6z" fill="#18a830" />
        </svg>
      </span>
      <span className="flex flex-1 items-center justify-center">
        <span className="h-0 w-0 border-x-[4px] border-t-[5px] border-x-transparent border-t-black" />
      </span>
    </div>
  );
}

function TitleBar() {
  return (
    <div className="flex h-[24px] shrink-0 items-center bg-linear-to-b from-[#c2dce8] to-[#a0c0ce] pl-[4px] text-[11px] text-[#111]">
      <CandleLogo />
      <span className="ml-[3px] h-0 w-0 border-x-[3.5px] border-t-[5px] border-x-transparent border-t-black" />
      <span className="ml-[4px]">GBPNZD</span>
      <span className="ml-[13px] flex h-[14px] w-[12px] items-center justify-center border border-[#8a9aa0] bg-[#e0e6e8] font-['Liberation_Serif',serif] font-bold text-[#667]">i</span>
      <span className="ml-[11px] font-bold text-[#a01010]">1,89908 (-0,13%)</span>
      <span className="ml-[7px] font-bold">19:34:29</span>
      <span className="ml-[4px]">GBP/NZD Mini (-)</span>
      <div className="ml-auto flex h-[24px] w-[78px] items-center bg-linear-to-b from-[#6ca4e4] to-[#4a84d4] pl-[6px] text-white">
        <svg width={20} height={17} viewBox="0 0 20 17">
          <rect width={20} height={17} rx={3} fill="#fff" />
          <g fill="#3a74c4">
            <rect x={3} y={4} width={2} height={2} /><rect x={6.5} y={4} width={2} height={2} /><rect x={10} y={4} width={2} height={2} /><rect x={13.5} y={4} width={2} height={2} />
            <rect x={3} y={8} width={2} height={2} /><rect x={6.5} y={8} width={2} height={2} /><rect x={10} y={8} width={2} height={2} /><rect x={13.5} y={8} width={2} height={2} />
            <rect x={5} y={12} width={10} height={2} />
          </g>
        </svg>
        <Minus size={12} strokeWidth={2.5} className="ml-[3px] mt-[6px]" />
        <Square size={11} strokeWidth={2} className="ml-[3px]" />
        <X size={14} strokeWidth={2.5} className="ml-[3px]" />
      </div>
    </div>
  );
}

function SummaryRow() {
  return (
    <div className="flex h-[23px] shrink-0 items-center border-y border-y-[#d3e2e9] border-b-[#7f97a3] bg-[#9bb8c5] pt-[1px] text-[11px] text-[#111]">
      <span className="ml-[243px]">Ordres :</span>
      <b className="ml-[5px]">0</b>
      <span className="ml-[3px]"><XBox /></span>
      <span className="ml-[8px]">/</span>
      <b className="ml-[4px]">0</b>
      <FaCogs size={16} className="ml-[1px] text-[#1c5cb4]" />
      <span className="ml-[243px]">Position :</span>
      <b className="ml-[6px] text-[#209020]">0</b>
      <span className="ml-[3px]"><XBox pink /></span>
      <span className="ml-[8px]">/</span>
      <b className="ml-[4px]">0</b>
      <FaCogs size={16} className="ml-[1px] text-[#1c5cb4]" />
      <span className="ml-[241px]">Gain latent :</span>
      <b className="ml-[14px]">0,00 €</b>
      <span className="ml-[246px]">Gain Jour :</span>
      <b className="ml-[14px]">0,00 €</b>
    </div>
  );
}

function ControlRow() {
  return (
    <div className="flex h-[48px] shrink-0 items-center bg-linear-to-b from-[#9bb8c5] to-white">
      <div className="ml-[222px]"><Select label="10000 unités" width="w-[84px]" /></div>
      <div className="ml-[284px]"><Select label="1 heure" width="w-[87px]" /></div>
      <IndicatorBtn />
      <TradingPanel />
    </div>
  );
}

function Gutter() {
  return <div className="w-[3px] shrink-0 bg-linear-to-r from-[#c4dae4] to-[#87a5b2]" />;
}

function BottomIcons() {
  return (
    <div className="ml-[5px] flex items-center">
      <svg width={20} height={24} viewBox="0 0 20 24">
        <g fill="none" stroke="#111" strokeWidth={1.2}>
          <rect x={1.5} y={2} width={4} height={6} rx={2} /><rect x={1.5} y={8} width={4} height={6} rx={2} /><rect x={1.5} y={14} width={4} height={6} rx={2} />
        </g>
        <rect x={8} y={10} width={4} height={7} fill="#e86060" stroke="#602020" />
        <rect x={14} y={4} width={5} height={10} fill="#30c040" stroke="#106020" />
        <path d="M14 19h5l-2.5 3z" fill="#111" />
      </svg>
      <svg width={15} height={18} viewBox="0 0 15 18" className="ml-[11px]">
        <rect x={0.5} y={0.5} width={14} height={17} fill="#fff" stroke="#222" />
        <path d="M3 3h6M3 6h8M5 9h7M3 12h8M3 15h6" stroke="#111" strokeWidth={1.6} />
        <path d="M9 2l4 3-4 1z" fill="#e83030" />
      </svg>
      <svg width={18} height={21} viewBox="0 0 18 21" className="ml-[12px]">
        <g fill="#e86060"><rect y={2} width={8} height={4} /><rect x={9} y={8} width={9} height={4} /><rect y={14} width={8} height={4} /></g>
        <g fill="#30a848"><rect x={9} y={2} width={9} height={4} /><rect y={8} width={8} height={4} /><rect x={9} y={14} width={9} height={4} /></g>
        <line x1={8.5} x2={8.5} y1={0} y2={21} stroke="#222" />
      </svg>
    </div>
  );
}

function ZoomIcon({ sign }: { sign: '+' | '-' }) {
  return (
    <svg width={20} height={22} viewBox="0 0 20 22">
      <circle cx={8} cy={8} r={6.5} fill="#fff" stroke="#444" strokeWidth={1.5} />
      <path d="M12 13l6 7" stroke="#111" strokeWidth={3} />
      <path d={sign === '+' ? 'M5 8h6M8 5v6' : 'M5 8h6'} stroke="#1040c0" strokeWidth={2.2} />
    </svg>
  );
}

function BottomBar() {
  return (
    <div className="flex h-[35px] shrink-0 items-center border-t border-[#7f97a3] bg-linear-to-b from-[#bcd3dd] to-[#9bb8c5] pl-[5px]">
      <button className="flex h-[24px] w-[67px] items-center gap-[3px] rounded-[3px] bg-linear-to-b from-[#4098e0] to-[#2a7cc8] pl-[3px] text-[11px] text-white">
        <Share2 size={16} strokeWidth={2.5} className="fill-white" />
        Partager
      </button>
      <BottomIcons />
      <div className="ml-[7px] flex h-[15px] w-[1378px] items-center justify-between rounded-[3px] border border-[#6c8490] bg-[#9bb8c5]">
        <span className="flex h-[13px] w-[14px] items-center justify-center rounded-[2px] bg-[#e8eef2]"><ChevronLeft size={10} strokeWidth={4} className="text-black" /></span>
        <span className="flex h-[13px] w-[25px] items-center justify-between rounded-[2px] bg-[#e8eef2] pl-[2px]">
          <span className="h-[7px] w-[6px] border-y-2 border-[#9aacb4] bg-[#d0dade]" />
          <ChevronRight size={10} strokeWidth={4} className="text-black" />
        </span>
      </div>
      <svg width={18} height={24} viewBox="0 0 18 24" className="ml-[7px]">
        <rect x={9} y={6} width={7} height={14} fill="#30c040" stroke="#106020" />
        <line x1={12.5} x2={12.5} y1={1} y2={23} stroke="#106020" />
        <path d="M1 21l8-8-1-4 4-3 3 1-3 2 1 2 3-2v3l-4 2-7 8z" fill="#fff" stroke="#111" strokeWidth={0.8} />
      </svg>
      <svg width={24} height={24} viewBox="0 0 24 24" className="ml-[7px]">
        <circle cx={9} cy={8} r={6.5} fill="#dde" stroke="#444" strokeWidth={1.5} />
        <path d="M13 13l7 8" stroke="#111" strokeWidth={3} />
        <path d="M20 1v10M18 3l2-3 2 3M18 9l2 3 2-3M1 20h10M3 18l-3 2 3 2M9 18l3 2-3 2" stroke="#1040c0" strokeWidth={1.3} fill="none" />
      </svg>
      <span className="ml-[6px] flex"><ZoomIcon sign="-" /></span>
      <span className="ml-[6px] flex"><ZoomIcon sign="+" /></span>
    </div>
  );
}

export default function App() {
  return (
    <div className="relative flex h-[981px] w-[1654px] flex-col overflow-hidden bg-[#9bb8c5] font-['Liberation_Sans',Arial,sans-serif]">
      <TitleBar />
      <SummaryRow />
      <ControlRow />

      <div className="relative z-10 flex h-[681px] shrink-0">
        <Gutter />
        <MainChart />
        <div className="relative w-[50px] shrink-0 border-x border-[#7f97a3] bg-white">
          <AxisLabels items={PRICE_LABELS} top={95} boxWidth="w-[43px]" />
        </div>
        <div className="w-[6px] bg-[#9bb8c5]" />

        <div className="absolute left-[4px] top-[1px] flex h-[17px] w-[108px] items-center gap-[3px] border border-[#7f97a3] bg-[#a9c3ce] pl-[3px] text-[11px] text-black">
          <span className="mr-[2px]">Prix</span>
          <WrenchBtn />
          <WindowIcon />
          <CloseDot />
          <DocArrow />
          <DocArrow up />
        </div>
        <div className="absolute left-[589px] top-0 h-[17px] rounded-b-[4px] border border-t-0 border-[#f0a8ac] bg-[#f8c8cc] px-[2px] text-[11px] leading-[16px] tracking-[-0.1px] text-[#222]">1@1,91556</div>
        <div className="absolute left-[671px] top-[664px] h-[17px] rounded-t-[4px] border border-b-0 border-[#60d060] bg-[#b8ecb0] px-[2px] text-[11px] leading-[16px] tracking-[-0.1px] text-[#222]">1@1,90939</div>
      </div>

      <div className="h-[3px] shrink-0 border-y border-[#7f97a3] bg-[#e8eef5]" />

      <div className="relative flex h-[146px] shrink-0">
        <Gutter />
        <MacdChart />
        <div className="relative w-[50px] shrink-0 border-x border-[#7f97a3] bg-white">
          <AxisLabels items={MACD_LABELS} top={779} boxWidth="w-[46px]" />
        </div>
        <div className="w-[6px] bg-[#9bb8c5]" />
        <div className="absolute left-[4px] top-[1px] flex h-[17px] w-[135px] items-center gap-[3px] border border-[#7f97a3] bg-[#a9c3ce] pl-[3px] text-[11px] text-black">
          <span className="mr-[2px] whitespace-nowrap">MACD (12 26 9)</span>
          <WrenchBtn />
          <WindowIcon />
          <CloseDot />
        </div>
      </div>

      <div className="relative flex h-[21px] shrink-0">
        <Gutter />
        <div className="relative w-[1595px] shrink-0 border-t border-[#7f97a3] bg-white">
          {TIMES.map(([x, t, bold]) => (
            <div key={`${x}${t}`}>
              <span className="absolute top-0 h-[4px] w-px bg-[#667]" style={{ left: x - 3 }} />
              <span
                className={`absolute top-[5px] -translate-x-1/2 leading-[14px] text-black ${bold ? 'text-[12px] font-bold' : 'text-[11px]'}`}
                style={{ left: x - 3 }}
              >
                {t}
              </span>
            </div>
          ))}
          <div className="absolute left-[661px] top-[4px] flex h-[15px] w-[116px] items-center justify-center border border-[#7a8a70] bg-[#ffff10] text-[11px] whitespace-nowrap text-black">
            mer. 30 mai 2018 13:00
          </div>
        </div>
        <div className="flex-1 bg-[#9bb8c5]" />
      </div>

      <BottomBar />
    </div>
  );
}
